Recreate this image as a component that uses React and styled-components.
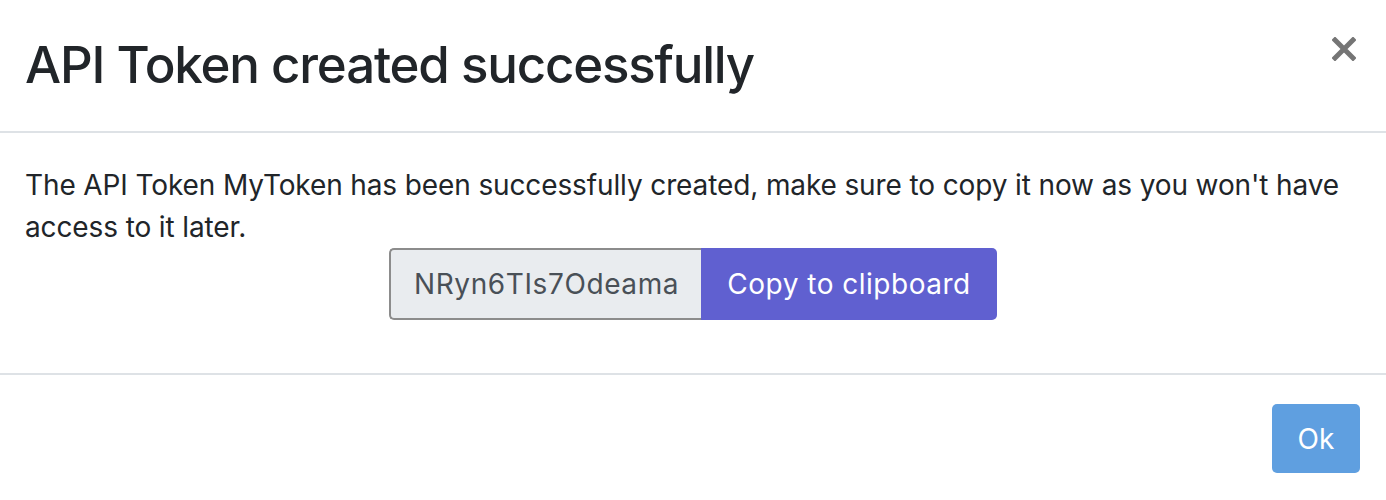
import React from "react";
import styled, { createGlobalStyle } from "styled-components";

const GlobalStyle = createGlobalStyle`
  html, body {
    margin: 0;
    padding: 0;
    background: #ffffff;
  }
  body {
    font-family: Inter, "Liberation Sans", Arial, sans-serif;
    color: #212529;
  }
`;

const Modal = styled.div`
  width: 1386px;
  display: flex;
  flex-direction: column;
  background: #ffffff;
`;

const Header = styled.div`
  display: flex;
  align-items: flex-start;
  justify-content: space-between;
  padding: 33px 25px 34px 25px;
  border-bottom: 2px solid #dee2e6;
`;

const Title = styled.h5`
  margin: 0;
  font-size: 51px;
  font-weight: 500;
  line-height: 64px;
  letter-spacing: -1.2px;
  color: #212529;
`;

const Close = styled.button`
  border: 0;
  background: transparent;
  padding: 0;
  margin: 3px 4px 0 0;
  width: 26px;
  height: 26px;
  display: flex;
  align-items: center;
  justify-content: center;
  cursor: pointer;
`;

const Body = styled.div`
  padding: 31px 25px 53px 25px;
  border-bottom: 2px solid #dee2e6;
`;

const Text = styled.p`
  margin: 0;
  font-size: 28px;
  line-height: 42px;
  letter-spacing: -0.12px;
`;

const InputGroup = styled.div`
  display: flex;
  justify-content: center;
`;

const TokenInput = styled.input`
  box-sizing: border-box;
  width: 312px;
  height: 72px;
  padding: 0 18px 0 23px;
  font-family: inherit;
  font-size: 28px;
  letter-spacing: 0.6px;
  color: #495057;
  background: #e9ecef;
  border: 2px solid #8c8c8c;
  border-right: 0;
  border-radius: 5px 0 0 5px;
  outline: none;
`;

const CopyButton = styled.button`
  box-sizing: border-box;
  width: 296px;
  height: 72px;
  border: 0;
  border-radius: 0 5px 5px 0;
  background: #6060d0;
  color: #ffffff;
  font-family: inherit;
  font-size: 28px;
  letter-spacing: 0.5px;
  cursor: pointer;
`;

const Footer = styled.div`
  display: flex;
  justify-content: flex-end;
  padding: 29px 26px;
`;

const OkButton = styled.button`
  width: 88px;
  height: 69px;
  border: 0;
  border-radius: 5px;
  background: #5f9fe0;
  color: #ffffff;
  font-family: inherit;
  font-size: 28px;
  cursor: pointer;
`;

export default function App() {
  return (
    <>
      <GlobalStyle />
      <Modal>
        <Header>
          <Title>API Token created successfully</Title>
          <Close aria-label="Close">
            <svg width="24" height="24" viewBox="0 0 24 24">
              <path
                d="M3 3 L21 21 M21 3 L3 21"
                stroke="#757575"
                strokeWidth="5"
                strokeLinecap="square"
              />
            </svg>
          </Close>
        </Header>
        <Body>
          <Text>
            The API Token MyToken has been successfully created, make sure to
            copy it now as you won't have access to it later.
          </Text>
          <InputGroup>
            <TokenInput readOnly value="NRyn6TIs7Odeama" />
            <CopyButton>Copy to clipboard</CopyButton>
          </InputGroup>
        </Body>
        <Footer>
          <OkButton>Ok</OkButton>
        </Footer>
      </Modal>
    </>
  );
}
